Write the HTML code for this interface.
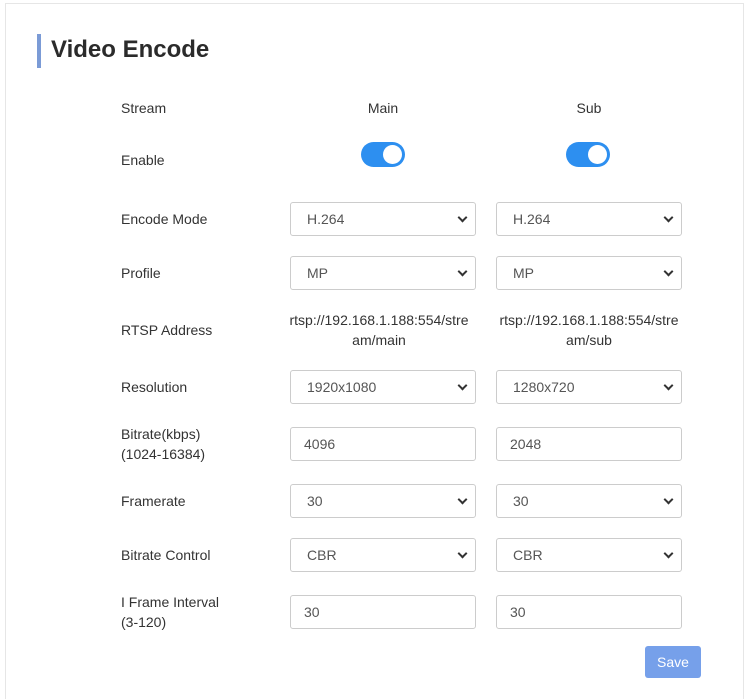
<!DOCTYPE html>
<html><head><style>
html,body{margin:0;width:749px;height:699px;overflow:hidden}
body{background:#fff;font-family:"Liberation Sans",Arial,sans-serif;position:relative;color:#333}
.card{position:absolute;left:5px;top:3px;width:739px;height:696px;border:1px solid #e6e6e6;border-bottom:none;box-sizing:border-box}
.bar{position:absolute;left:37px;top:34px;width:4px;height:34px;background:#7b9bd6}
.title{position:absolute;left:51px;top:36px;font-size:24px;font-weight:bold;color:#2b2b2b}
.l{position:absolute;left:121px;font-size:14px;color:#333;line-height:20px}
.c{position:absolute;font-size:14px;color:#333;text-align:center;line-height:20px}
.f{position:absolute;width:186px;height:34px;border:1px solid #ccc;border-radius:3px;box-sizing:border-box;font-size:14px;color:#555;padding-left:16px;line-height:32px}
.f.s::after{content:"";position:absolute;right:9px;top:11px;width:5px;height:5px;border-right:2px solid #333;border-bottom:2px solid #333;transform:rotate(45deg)}
.f.i{padding-left:13px}
.t{position:absolute;top:142px;width:44px;height:25px;border-radius:13px;background:#2d8ff0}
.t::after{content:"";position:absolute;right:3px;top:3px;width:19px;height:19px;border-radius:50%;background:#fff}
.save{position:absolute;left:645px;top:646px;width:56px;height:32px;background:#76a0ea;border-radius:3px;color:#fff;font-size:14px;text-align:center;line-height:32px}
</style></head><body>
<div class="card"></div>
<div class="bar"></div><div class="title">Video Encode</div>
<div class="l" style="top:98px">Stream</div>
<div class="c" style="left:290px;width:186px;top:98px">Main</div>
<div class="c" style="left:496px;width:186px;top:98px">Sub</div>
<div class="l" style="top:150px">Enable</div>
<div class="t" style="left:361px"></div><div class="t" style="left:566px"></div>
<div class="l" style="top:209px">Encode Mode</div>
<div class="f s" style="left:290px;top:202px">H.264</div><div class="f s" style="left:496px;top:202px">H.264</div>
<div class="l" style="top:263px">Profile</div>
<div class="f s" style="left:290px;top:256px">MP</div><div class="f s" style="left:496px;top:256px">MP</div>
<div class="l" style="top:320px">RTSP Address</div>
<div class="c" style="left:279px;width:200px;top:310px">rtsp://192.168.1.188:554/stre<br>am/main</div>
<div class="c" style="left:489px;width:200px;top:310px">rtsp://192.168.1.188:554/stre<br>am/sub</div>
<div class="l" style="top:377px">Resolution</div>
<div class="f s" style="left:290px;top:370px">1920x1080</div><div class="f s" style="left:496px;top:370px">1280x720</div>
<div class="l" style="top:424px">Bitrate(kbps)<br>(1024-16384)</div>
<div class="f i" style="left:290px;top:427px">4096</div><div class="f i" style="left:496px;top:427px">2048</div>
<div class="l" style="top:491px">Framerate</div>
<div class="f s" style="left:290px;top:484px">30</div><div class="f s" style="left:496px;top:484px">30</div>
<div class="l" style="top:545px">Bitrate Control</div>
<div class="f s" style="left:290px;top:538px">CBR</div><div class="f s" style="left:496px;top:538px">CBR</div>
<div class="l" style="top:592px">I Frame Interval<br>(3-120)</div>
<div class="f i" style="left:290px;top:595px">30</div><div class="f i" style="left:496px;top:595px">30</div>
<div class="save">Save</div>
</body></html>
